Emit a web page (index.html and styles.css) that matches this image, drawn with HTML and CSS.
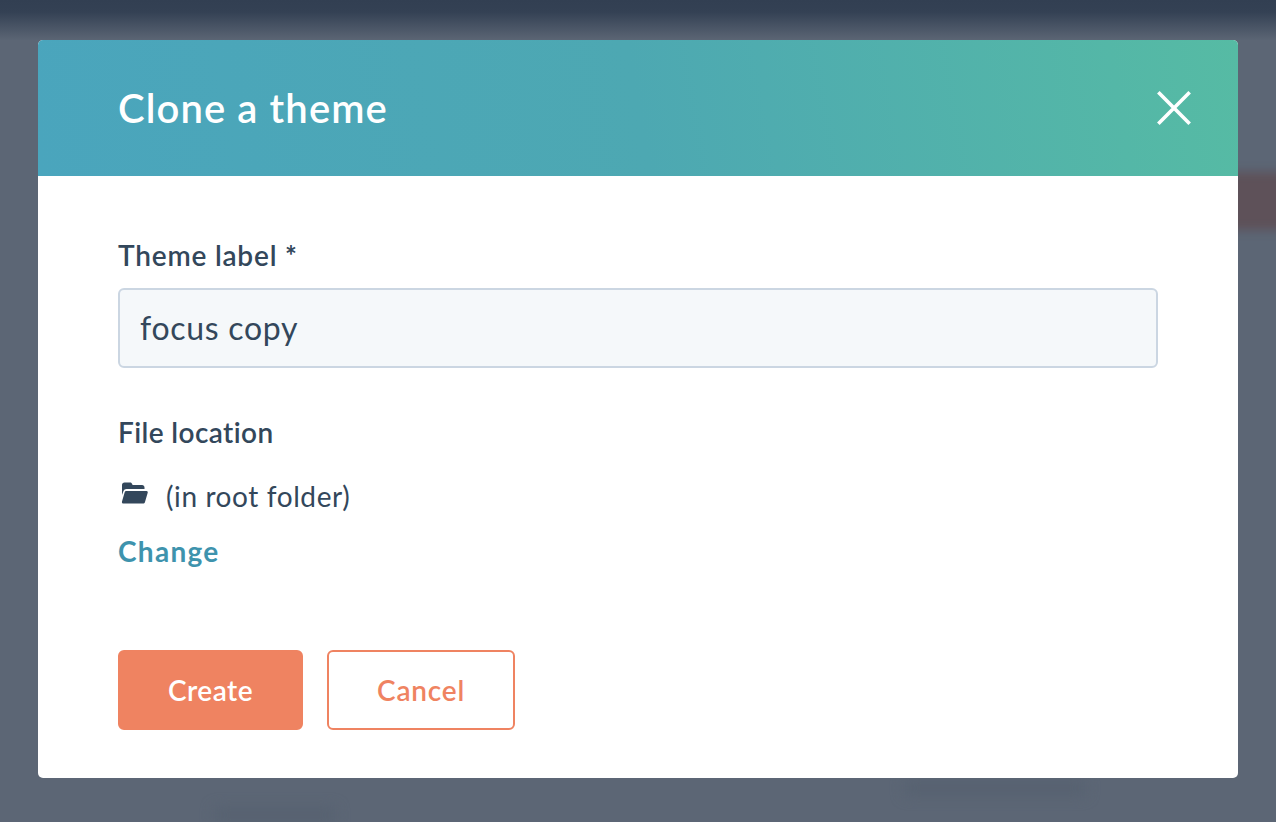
FILE: index.html
```html
<!DOCTYPE html>
<html lang="en">
<head>
    <meta charset="UTF-8">
    <meta name="viewport" content="width=device-width, initial-scale=1.0">
    <title>Clone a theme</title>
    <link rel="stylesheet" href="styles.css">
</head>
<body>
    <!-- Blurred page behind the modal -->
    <div class="backdrop">
        <div class="backdrop-nav"></div>
        <div class="backdrop-alert"></div>
        <div class="backdrop-text backdrop-text-left"></div>
        <div class="backdrop-text backdrop-text-right"></div>
    </div>

    <div class="modal">
        <div class="modal-header">
            <h1 class="modal-title">Clone a theme</h1>
            <button class="modal-close" aria-label="Close">
                <svg width="34" height="34" viewBox="0 0 34 34">
                    <path d="M2.6 2.6 L31.4 31.4 M31.4 2.6 L2.6 31.4" stroke="#fff" stroke-width="3.6" stroke-linecap="square" fill="none"/>
                </svg>
            </button>
        </div>
        <div class="modal-body">
            <label class="field-label theme-label" for="themeLabel">Theme label <b class="required">*</b></label>
            <input id="themeLabel" class="field-input" type="text" value="focus copy">

            <div class="field-label location-label">File location</div>
            <div class="location-row">
                <svg class="folder-icon" width="29" height="24" viewBox="0 0 29 24">
                    <path d="M2 4 C2 2.5 3 1.5 4.5 1.5 H10 C11 1.5 11.6 2 12 2.8 L12.6 4 H22 C23.5 4 24.5 5 24.5 6.5 V8 H6.5 C5 8 4 8.8 3.5 10 L2 14 Z" fill="#33475b"/>
                    <path d="M6.5 10 H26.5 C27.5 10 28 10.9 27.7 11.8 L25 21 C24.7 22 24 22.5 23 22.5 H3.5 C2.3 22.5 1.6 21.5 2 20.4 L4.6 11.4 C5 10.4 5.6 10 6.5 10 Z" fill="#33475b"/>
                </svg>
                <span class="location-text">(in root folder)</span>
            </div>
            <a class="change-link" href="#">Change</a>

            <div class="modal-actions">
                <button class="btn btn-primary">Create</button>
                <button class="btn btn-secondary">Cancel</button>
            </div>
        </div>
    </div>
</body>
</html>
```

FILE: styles.css
```css
html, body {
    margin: 0;
    height: 100%;
    overflow: hidden;
}

body {
    position: relative;
    background: #5c6675;
    font-family: Lato, "Open Sans", sans-serif;
    color: #33475b;
}

/* Blurred page behind the modal */
.backdrop {
    position: absolute;
    top: 0;
    left: 0;
    width: 100%;
    height: 100%;
    overflow: hidden;
}

.backdrop-nav {
    height: 40px;
    background: linear-gradient(180deg, #323f52 0%, #344154 30%, #5b6574 100%);
}

.backdrop-alert {
    position: absolute;
    top: 172px;
    right: -40px;
    width: 110px;
    height: 58px;
    background: #5e5159;
    filter: blur(5px);
}

.backdrop-text {
    position: absolute;
    height: 14px;
    background: #566170;
    filter: blur(7px);
}

.backdrop-text-left {
    left: 215px;
    top: 808px;
    width: 120px;
}

.backdrop-text-right {
    left: 905px;
    top: 781px;
    width: 180px;
}

/* Modal */
.modal {
    position: absolute;
    top: 40px;
    left: 38px;
    width: 1200px;
    height: 738px;
    background: #fff;
    border-radius: 5px;
    overflow: hidden;
}

.modal-header {
    height: 136px;
    box-sizing: border-box;
    padding: 0 47px 0 80px;
    display: flex;
    justify-content: space-between;
    align-items: center;
    background: linear-gradient(80deg, #4aa5bd 0%, #4da8b2 50%, #56bba4 100%);
}

.modal-title {
    margin: 0;
    font-size: 40px;
    font-weight: 600;
    letter-spacing: 1.1px;
    color: #fff;
}

.modal-close {
    display: flex;
    padding: 0;
    border: none;
    background: none;
    cursor: pointer;
}

.modal-body {
    padding: 62px 80px 0;
}

.field-label {
    display: block;
    font-size: 28px;
    font-weight: 600;
    line-height: 34px;
    letter-spacing: 0.4px;
}

.theme-label {
    letter-spacing: 0.8px;
}

.required {
    font-weight: 700;
}

.field-input {
    display: block;
    box-sizing: border-box;
    width: 100%;
    height: 80px;
    margin-top: 16px;
    padding: 0 20px 2px;
    background: #f5f8fa;
    border: 2px solid #cbd6e2;
    border-radius: 6px;
    font-family: inherit;
    font-size: 32px;
    letter-spacing: 0.7px;
    color: #33475b;
}

.location-label {
    margin-top: 47px;
}

.location-row {
    display: flex;
    align-items: center;
    gap: 17px;
    margin-top: 30px;
    height: 34px;
}

.folder-icon {
    align-self: flex-start;
    margin: 2px 0 0 2px;
}

.location-text {
    font-size: 28px;
    letter-spacing: 0.6px;
}

.change-link {
    display: block;
    margin-top: 21px;
    font-size: 28px;
    font-weight: 700;
    line-height: 34px;
    letter-spacing: 1.3px;
    color: #3e93ad;
    text-decoration: none;
}

.modal-actions {
    display: flex;
    gap: 24px;
    margin-top: 82px;
}

.btn {
    box-sizing: border-box;
    height: 80px;
    border-radius: 6px;
    border: 2px solid #ef8361;
    font-family: inherit;
    font-size: 28px;
    font-weight: 600;
    letter-spacing: 0.5px;
    cursor: pointer;
}

.btn-primary {
    width: 185px;
    background: #ef8361;
    color: #fff;
}

.btn-secondary {
    width: 188px;
    background: #fff;
    color: #ef8361;
    letter-spacing: 0.8px;
}
```
